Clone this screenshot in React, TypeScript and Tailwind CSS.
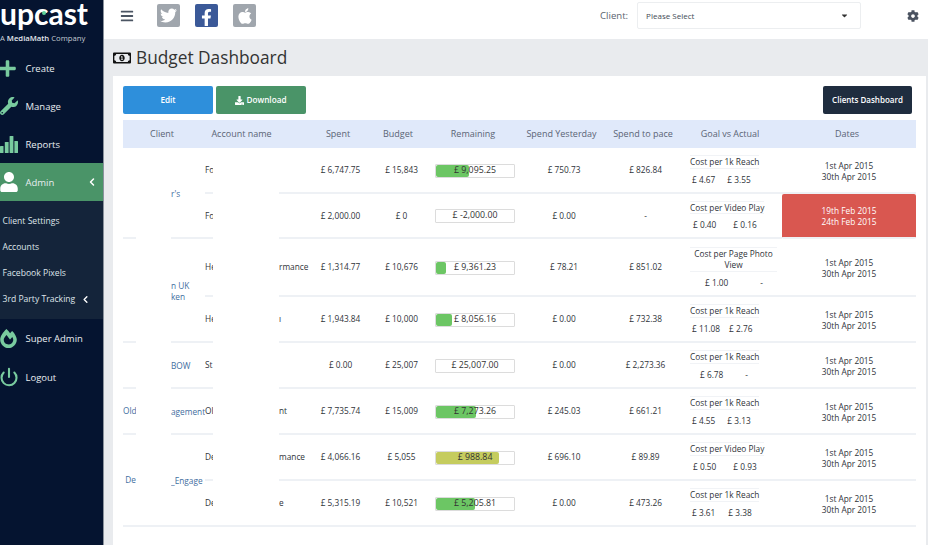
import { ChevronLeft, Power } from "lucide-react";
import {
  FaApple,
  FaBars,
  FaCaretDown,
  FaCog,
  FaDownload,
  FaFacebookF,
  FaFireAlt,
  FaPlus,
  FaRegMoneyBillAlt,
  FaTwitter,
  FaUser,
  FaWrench,
} from "react-icons/fa";

interface BudgetRow {
  left?: { text: string; span: number };
  mid?: { text: string; span: number };
  account: string;
  tail: string;
  spent: string;
  budget: string;
  remaining: string;
  fill: number;
  fillClass: string;
  yesterday: string;
  pace: string;
  goal: string;
  goalClass: string;
  target: string;
  actual: string;
  valueClass: string;
  from: string;
  to: string;
  late?: boolean;
  height: string;
}

const rows: BudgetRow[] = [
  {
    left: { text: "", span: 2 }, mid: { text: "r's", span: 2 }, account: "Fo", tail: "",
    spent: "£ 6,747.75", budget: "£ 15,843", remaining: "£ 9,095.25", fill: 33, fillClass: "bg-[#6cc664]",
    yesterday: "£ 750.73", pace: "£ 826.84", goal: "Cost per 1k Reach", goalClass: "w-[69px] whitespace-nowrap", target: "£ 4.67", actual: "£ 3.55",
    valueClass: "pl-[2px] gap-[12px]", from: "1st Apr 2015", to: "30th Apr 2015", height: "h-[46px]",
  },
  {
    account: "Fo", tail: "", spent: "£ 2,000.00", budget: "£ 0", remaining: "£ -2,000.00", fill: 0, fillClass: "",
    yesterday: "£ 0.00", pace: "-", goal: "Cost per Video Play", goalClass: "w-[74px] whitespace-nowrap", target: "£ 0.40", actual: "£ 0.16",
    valueClass: "pl-[3px] gap-[17px]", from: "19th Feb 2015", to: "24th Feb 2015", late: true, height: "h-[45px]",
  },
  {
    left: { text: "", span: 2 }, mid: { text: "n UK\nken", span: 2 }, account: "He", tail: "rmance",
    spent: "£ 1,314.77", budget: "£ 10,676", remaining: "£ 9,361.23", fill: 10, fillClass: "bg-[#6cc664]",
    yesterday: "£ 78.21", pace: "£ 851.02", goal: "Cost per Page Photo View", goalClass: "w-[87px]", target: "£ 1.00", actual: "-",
    valueClass: "pl-[15px] gap-[32px]", from: "1st Apr 2015", to: "30th Apr 2015", height: "h-[58px]",
  },
  {
    account: "He", tail: "ı", spent: "£ 1,943.84", budget: "£ 10,000", remaining: "£ 8,056.16", fill: 16, fillClass: "bg-[#6cc664]",
    yesterday: "£ 0.00", pace: "£ 732.38", goal: "Cost per 1k Reach", goalClass: "w-[69px] whitespace-nowrap", target: "£ 11.08", actual: "£ 2.76",
    valueClass: "pl-[2px] gap-[9px]", from: "1st Apr 2015", to: "30th Apr 2015", height: "h-[46px]",
  },
  {
    left: { text: "", span: 1 }, mid: { text: "BOW", span: 1 }, account: "St", tail: "",
    spent: "£ 0.00", budget: "£ 25,007", remaining: "£ 25,007.00", fill: 0, fillClass: "",
    yesterday: "£ 0.00", pace: "£ 2,273.36", goal: "Cost per 1k Reach", goalClass: "w-[69px] whitespace-nowrap", target: "£ 6.78", actual: "-",
    valueClass: "pl-[10px] gap-[22px]", from: "1st Apr 2015", to: "30th Apr 2015", height: "h-[46px]",
  },
  {
    left: { text: "Old", span: 1 }, mid: { text: "agement", span: 1 }, account: "Ol", tail: "nt",
    spent: "£ 7,735.74", budget: "£ 15,009", remaining: "£ 7,273.26", fill: 40, fillClass: "bg-[#6cc664]",
    yesterday: "£ 245.03", pace: "£ 661.21", goal: "Cost per 1k Reach", goalClass: "w-[69px] whitespace-nowrap", target: "£ 4.55", actual: "£ 3.13",
    valueClass: "pl-[2px] gap-[12px]", from: "1st Apr 2015", to: "30th Apr 2015", height: "h-[46px]",
  },
  {
    left: { text: " De", span: 2 }, mid: { text: "_Engage", span: 2 }, account: "De", tail: "mance",
    spent: "£ 4,066.16", budget: "£ 5,055", remaining: "£ 988.84", fill: 63, fillClass: "bg-[#c5cc5e]",
    yesterday: "£ 696.10", pace: "£ 89.89", goal: "Cost per Video Play", goalClass: "w-[74px] whitespace-nowrap", target: "£ 0.50", actual: "£ 0.93",
    valueClass: "pl-[3px] gap-[17px]", from: "1st Apr 2015", to: "30th Apr 2015", height: "h-[46px]",
  },
  {
    account: "De", tail: "e", spent: "£ 5,315.19", budget: "£ 10,521", remaining: "£ 5,205.81", fill: 39, fillClass: "bg-[#6cc664]",
    yesterday: "£ 0.00", pace: "£ 473.26", goal: "Cost per 1k Reach", goalClass: "w-[69px] whitespace-nowrap", target: "£ 3.61", actual: "£ 3.38",
    valueClass: "pl-[2px] gap-[13px]", from: "1st Apr 2015", to: "30th Apr 2015", height: "h-[46px]",
  },
];

function ReportsIcon() {
  return (
    <svg viewBox="0 0 18 18" className="h-[18px] w-[18px] fill-[#79cb9f]">
      <rect x="0" y="11" width="3.5" height="7" rx="0.5" />
      <rect x="4.8" y="7" width="3.8" height="11" rx="0.5" />
      <rect x="9.6" y="1" width="3.8" height="17" rx="0.5" />
      <rect x="14.4" y="6" width="3.6" height="12" rx="0.5" />
    </svg>
  );
}

function NavItem({ icon, label, active }: { icon: React.ReactNode; label: string; active?: boolean }) {
  return (
    <div className={`flex h-[38px] items-center ${active ? "bg-[#4a9468]" : ""}`}>
      <div className="flex w-[25.5px] shrink-0 items-center">{icon}</div>
      <span className="pt-[2px] text-[9.5px] text-[#e8edf0]">{label}</span>
      {active && <ChevronLeft className="ml-auto mr-[5px] h-[12px] w-[12px] text-white" strokeWidth={3} />}
    </div>
  );
}

function Sidebar() {
  return (
    <div className="flex w-[104px] shrink-0 flex-col border-r border-[#8a929c] bg-[#051430]">
      <div className="h-[49px] overflow-hidden">
        <div className="relative -mt-[6px] h-[38px] font-['Lato',sans-serif] text-[30px] font-bold leading-[38px] text-white">
          upcast
          <div className="absolute left-[42px] top-[17px] h-[4px] w-[4px] rounded-full bg-[#5fd39a]" />
        </div>
        <div className="mt-[1px] whitespace-nowrap text-[7.7px] leading-[11px] text-[#c3cad2]">
          A <span className="font-semibold text-[#e4e8ec]">MediaMath</span> Company
        </div>
      </div>
      <NavItem icon={<FaPlus className="h-[19px] w-[19px] -translate-x-[2px] text-[#79cb9f]" />} label="Create" />
      <NavItem icon={<FaWrench className="h-[18px] w-[18px] text-[#79cb9f]" />} label="Manage" />
      <NavItem icon={<ReportsIcon />} label="Reports" />
      <NavItem icon={<FaUser className="h-[20px] w-[20px] -translate-x-[1px] text-white" />} label="Admin" active />
      <div className="flex h-[118px] flex-col whitespace-nowrap bg-[#14243a] pl-[2.5px] pt-[7px] text-[8.6px] text-[#dfe5ea]">
        <div className="flex h-[26px] items-center">Client Settings</div>
        <div className="flex h-[26px] items-center">Accounts</div>
        <div className="flex h-[26px] items-center">Facebook Pixels</div>
        <div className="flex h-[26px] items-center">
          3rd Party Tracking
          <ChevronLeft className="ml-[5px] h-[11px] w-[11px] text-white" strokeWidth={3} />
        </div>
      </div>
      <NavItem icon={<FaFireAlt className="h-[19px] w-[17px] text-[#79cb9f]" />} label="Super Admin" />
      <div className="mt-[1px]">
        <NavItem icon={<Power className="h-[20px] w-[20px] -translate-x-[1px] text-[#79cb9f]" strokeWidth={2.5} />} label="Logout" />
      </div>
    </div>
  );
}

function SocialSquare({ className, children }: { className: string; children: React.ReactNode }) {
  return <div className={`flex h-[23px] w-[23px] items-center justify-center rounded-[2px] text-white ${className}`}>{children}</div>;
}

function TopBar() {
  return (
    <div className="flex h-[39px] shrink-0 items-start bg-white">
      <FaBars className="ml-[16px] mt-[9px] h-[14px] w-[14px] text-[#4b5563]" />
      <div className="ml-[23px] mt-[4px] flex gap-[15px]">
        <SocialSquare className="bg-[#a0a6ad]"><FaTwitter className="h-[17px] w-[17px]" /></SocialSquare>
        <SocialSquare className="bg-[#3b5998]"><FaFacebookF className="mt-[3px] h-[17px] w-[17px]" /></SocialSquare>
        <SocialSquare className="bg-[#a0a6ad]"><FaApple className="h-[18px] w-[18px]" /></SocialSquare>
      </div>
      <span className="ml-[344px] mt-[9px] text-[9.6px] text-[#5b6470]">Client:</span>
      <div className="ml-[9px] mt-[2px] flex h-[27px] w-[224px] items-center rounded-[2px] border border-[#eceef0] pl-[8px] pr-[11px] text-[8px] text-[#444c56]">
        Please Select
        <FaCaretDown className="ml-auto h-[9px] w-[9px] text-[#333]" />
      </div>
      <FaCog className="ml-[46px] mt-[10px] h-[12px] w-[12px] text-[#4a5260]" />
    </div>
  );
}

function Remaining({ row }: { row: BudgetRow }) {
  return (
    <div className="relative ml-[5px] flex h-[14px] w-[80px] items-center justify-center rounded-[1px] border border-[#dcdcdc] text-[8.8px] text-[#333]">
      {row.fill > 0 && (
        <div className={`absolute left-0 top-0 h-full rounded-[2px] ${row.fillClass}`} style={{ width: row.fill }} />
      )}
      <span className="relative">{row.remaining}</span>
    </div>
  );
}

function BudgetTable() {
  const rowCell = "border-b-2 border-[#eef1f5] pt-[1px]";
  return (
    <table className="w-[793px] table-fixed border-separate border-spacing-0 text-[8.3px] text-[#2f3339]">
      <colgroup>
        <col className="w-[13px]" />
        <col className="w-[35px]" />
        <col className="w-[34px]" />
        <col className="w-[8px]" />
        <col className="w-[66px]" />
        <col className="w-[31px]" />
        <col className="w-[60px]" />
        <col className="w-[60px]" />
        <col className="w-[95px]" />
        <col className="w-[75px]" />
        <col className="w-[90px]" />
        <col className="w-[92px]" />
        <col className="w-[134px]" />
      </colgroup>
      <thead>
        <tr className="h-[28px] bg-[#e0e9fa] text-[9px] font-normal text-[#5a6475]">
          <th colSpan={3} className="pr-[4px] text-center font-normal">Client</th>
          <th colSpan={3} className="pr-[32px] text-center font-normal">Account name</th>
          <th className="pr-[4px] text-center font-normal">Spent</th>
          <th className="pr-[4px] text-center font-normal">Budget</th>
          <th className="pr-[9px] text-center font-normal">Remaining</th>
          <th className="pr-[2px] text-center font-normal whitespace-nowrap">Spend Yesterday</th>
          <th className="pr-[4px] text-center font-normal">Spend to pace</th>
          <th className="pr-[12px] text-center font-normal">Goal vs Actual</th>
          <th className="pr-[4px] text-center font-normal">Dates</th>
        </tr>
      </thead>
      <tbody>
        {rows.map((row, i) => {
          const last = i === rows.length - 1;
          return (
            <tr key={i} className={row.height}>
              {row.left && (
                <td rowSpan={row.left.span} className={`overflow-hidden whitespace-pre text-[#3f6ea0] ${rowCell}`}>{row.left.text}</td>
              )}
              <td className={last ? rowCell : ""} />
              {row.mid && (
                <td rowSpan={row.mid.span} className={`overflow-hidden whitespace-pre leading-[11px] text-[#3f6ea0] ${rowCell}`}>{row.mid.text}</td>
              )}
              <td className={`overflow-hidden whitespace-nowrap ${rowCell}`}>{row.account}</td>
              <td className={last ? rowCell : ""} />
              <td className={`overflow-hidden whitespace-nowrap ${rowCell}`}>{row.tail}</td>
              <td className={`pl-[1px] text-center ${rowCell}`}>{row.spent}</td>
              <td className={`pl-[3px] text-center ${rowCell}`}>{row.budget}</td>
              <td className={rowCell}><Remaining row={row} /></td>
              <td className={`pl-[3px] text-center ${rowCell}`}>{row.yesterday}</td>
              <td className={`pl-[1px] text-center ${rowCell}`}>{row.pace}</td>
              <td className={rowCell}>
                <div className={row.goalClass}>
                  <div className="border-y border-[#f1f3f6] text-center leading-[11.5px]">{row.goal}</div>
                  <div className={`mt-[5px] flex leading-[12px] ${row.valueClass}`}>
                    <span>{row.target}</span>
                    <span>{row.actual}</span>
                  </div>
                </div>
              </td>
              <td className={`text-center leading-[11px] ${rowCell} ${row.late ? "rounded-[2px] bg-[#d95750] text-white" : ""}`}>
                <div>{row.from}</div>
                <div>{row.to}</div>
              </td>
            </tr>
          );
        })}
      </tbody>
    </table>
  );
}

export default function App() {
  return (
    <div className="flex h-[545px] w-[928px] overflow-hidden bg-[#e9ebee] font-['Open_Sans',sans-serif]">
      <Sidebar />
      <div className="flex min-w-0 flex-1 flex-col">
        <TopBar />
        <div className="flex h-[37px] shrink-0 items-center pl-[9px] pt-[1px]">
          <FaRegMoneyBillAlt className="h-[18px] w-[18px] text-[#111]" />
          <h1 className="ml-[5px] text-[17.3px] font-normal leading-none text-[#333]">Budget Dashboard</h1>
        </div>
        <div className="ml-[9px] mr-[2px] flex-1 bg-white pl-[10px] pt-[10px]">
          <div className="flex items-start">
            <button className="h-[28px] w-[90px] rounded-[2px] bg-[#2e8fdb] text-[8.2px] font-semibold text-white">Edit</button>
            <button className="ml-[3px] flex h-[28px] w-[90px] items-center justify-center gap-[2px] rounded-[2px] bg-[#4a9468] text-[8.2px] font-semibold text-white">
              <FaDownload className="h-[9px] w-[9px]" /> Download
            </button>
            <button className="ml-[517px] h-[28px] w-[89px] rounded-[2px] bg-[#1f2d3f] text-[8px] font-semibold text-white">Clients Dashboard</button>
          </div>
          <div className="mt-[6px]">
            <BudgetTable />
          </div>
        </div>
      </div>
    </div>
  );
}
